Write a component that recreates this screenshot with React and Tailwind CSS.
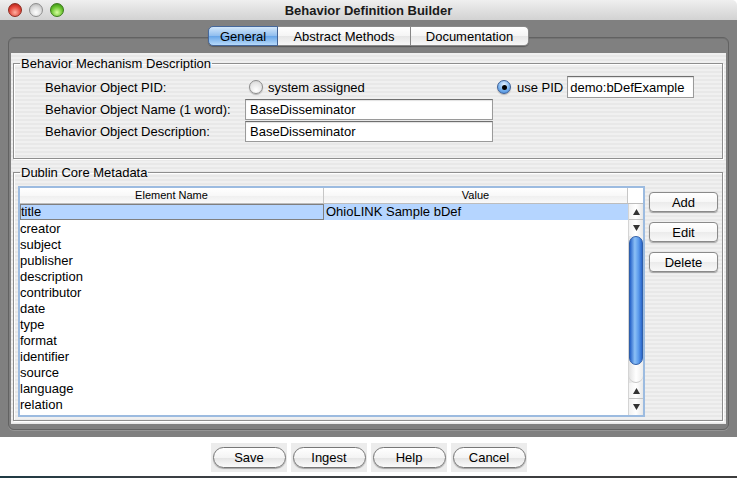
import React from "react";

const rows = [
  "title",
  "creator",
  "subject",
  "publisher",
  "description",
  "contributor",
  "date",
  "type",
  "format",
  "identifier",
  "source",
  "language",
  "relation",
];

const Radio = ({ checked }) => (
  <div
    className={`w-[14px] h-[14px] rounded-full border flex items-center justify-center shadow-[0_1px_1px_rgba(0,0,0,0.25)] ${
      checked
        ? "border-[#3d5f96] bg-[radial-gradient(circle_at_50%_30%,#e4f1ff,#79b2ee_55%,#3c7fd6)]"
        : "border-[#8c8c8c] bg-[radial-gradient(circle_at_50%_75%,#ffffff,#e6e6e6_60%,#cfcfcf)]"
    }`}
  >
    {checked && <div className="w-[5px] h-[5px] rounded-full bg-black"></div>}
  </div>
);

const TextBox = ({ value, className = "" }) => (
  <div
    className={`bg-white border border-[#9a9a9a] border-t-[#6f6f6f] shadow-[inset_0_1px_1px_rgba(0,0,0,0.12)] flex items-center overflow-hidden whitespace-nowrap ${className}`}
  >
    {value}
  </div>
);

const SideButton = ({ text }) => (
  <div className="w-[69px] h-[20px] rounded-[4px] border border-[#8a8a8a] bg-[linear-gradient(180deg,#ffffff,#f7f7f7_50%,#ebebeb_51%,#f8f8f8)] shadow-[0_1px_1px_rgba(0,0,0,0.3)] flex items-center justify-center">
    {text}
  </div>
);

const PillButton = ({ text }) => (
  <div className="w-[76px] h-[29px] bg-[#ececec] flex items-center justify-center">
    <div className="w-[73px] h-[21px] rounded-full border border-[#777] bg-[linear-gradient(180deg,#ffffff,#f4f4f4_50%,#e3e3e3_51%,#fbfbfb)] shadow-[0_1px_1px_rgba(0,0,0,0.3)] flex items-center justify-center">
      {text}
    </div>
  </div>
);

const Arrow = ({ up, border }) => (
  <div
    className={`h-[16px] flex items-center justify-center bg-[linear-gradient(90deg,#f2f2f2,#ffffff_50%,#e8e8e8)] ${
      border ? "border-b border-[#c4c4c4]" : ""
    }`}
  >
    <svg width="7" height="6" viewBox="0 0 7 6">
      {up ? <path d="M3.5 0 L7 6 L0 6 Z" fill="#333" /> : <path d="M0 0 L7 0 L3.5 6 Z" fill="#333" />}
    </svg>
  </div>
);

const TrafficLight = ({ className }) => (
  <div className={`w-[14px] h-[14px] rounded-full border ${className}`}></div>
);

export default function App() {
  return (
    <div className="w-[737px] h-[478px] bg-white overflow-hidden font-['Liberation_Sans',Arial,sans-serif] text-[13px] text-black leading-[15px]">
      {/* Title bar */}
      <div className="h-[20px] flex items-center bg-[linear-gradient(180deg,#efefef,#d2d2d2)] rounded-tr-[5px]">
        <div className="w-[64px] flex items-center gap-[7px] pl-[8px]">
          <TrafficLight className="border-[#8c2a1e] bg-[radial-gradient(circle_at_50%_70%,#ffb0a0,#e2463a_55%,#a3170d)]" />
          <TrafficLight className="border-[#8e8e8e] bg-[radial-gradient(circle_at_50%_70%,#ffffff,#dadada_55%,#a9a9a9)]" />
          <TrafficLight className="border-[#3b7a1b] bg-[radial-gradient(circle_at_50%_70%,#d8ffa0,#67c22c_55%,#2c7a0e)]" />
        </div>
        <div className="flex-1 text-center font-bold text-[#1a1a1a]">Behavior Definition Builder</div>
        <div className="w-[64px]"></div>
      </div>

      {/* Gray window body */}
      <div className="h-[417px] bg-[#808080] pt-[6px] px-[8px]">
        <div className="relative z-10 flex justify-center h-[20px]">
          <div className="w-[70px] rounded-l-[5px] border border-[#46689c] bg-[linear-gradient(180deg,#d3e7fb,#8fbdee_50%,#67a5e8_51%,#b7dafa)] flex items-center justify-center shadow-[0_1px_1px_rgba(0,0,0,0.3)]">
            General
          </div>
          <div className="w-[133px] border-y border-r border-[#8a8a8a] bg-[linear-gradient(180deg,#ffffff,#f5f5f5_50%,#e6e6e6_51%,#f7f7f7)] flex items-center justify-center shadow-[0_1px_1px_rgba(0,0,0,0.3)]">
            Abstract Methods
          </div>
          <div className="w-[118px] rounded-r-[5px] border-y border-r border-[#8a8a8a] bg-[linear-gradient(180deg,#ffffff,#f5f5f5_50%,#e6e6e6_51%,#f7f7f7)] flex items-center justify-center shadow-[0_1px_1px_rgba(0,0,0,0.3)]">
            Documentation
          </div>
        </div>

        {/* Tab panel */}
        <div className="-mt-[9px] rounded-[6px] border border-[#626262] shadow-[inset_0_1px_0_#737373,0_1px_0_#959595] pt-[15px] pb-[5px] px-[2px]">
          <div className="h-[371px] bg-[repeating-linear-gradient(180deg,#f0f0f0_0_2px,#e8e8e8_2px_4px)] pt-[3px] pl-[2px] pr-[3px]">
            {/* Behavior Mechanism Description */}
            <fieldset className="border border-[#8e8e8e] shadow-[inset_1px_1px_0_#fff,1px_1px_0_#fff]">
              <legend className="ml-[6px] px-[1px] leading-[15px]">Behavior Mechanism Description</legend>
              <div className="pt-[5px] pb-[16px] pl-[31px]">
                <div className="flex items-center h-[22px]">
                  <div className="w-[200px]">Behavior Object PID:</div>
                  <div className="w-[252px] flex items-center pl-[4px]">
                    <Radio />
                    <span className="ml-[5px]">system assigned</span>
                  </div>
                  <Radio checked />
                  <span className="ml-[6px]">use PID</span>
                  <TextBox value="demo:bDefExample" className="ml-[4px] w-[127px] h-[22px] pl-[2px]" />
                </div>
                <div className="flex items-center h-[21px] mt-[1px]">
                  <div className="w-[200px]">Behavior Object Name (1 word):</div>
                  <TextBox value="BaseDisseminator" className="w-[248px] h-[21px] px-[4px]" />
                </div>
                <div className="flex items-center h-[21px] mt-[1px]">
                  <div className="w-[200px]">Behavior Object Description:</div>
                  <TextBox value="BaseDisseminator" className="w-[248px] h-[21px] px-[4px]" />
                </div>
              </div>
            </fieldset>

            {/* Dublin Core Metadata */}
            <fieldset className="mt-[6px] border border-[#8e8e8e] shadow-[inset_1px_1px_0_#fff,1px_1px_0_#fff]">
              <legend className="ml-[6px] px-[1px] leading-[15px]">Dublin Core Metadata</legend>
              <div className="flex pt-[6px] pb-[3px] pl-[4px]">
                <div className="w-[627px] h-[231px] border-2 border-[#9cbbe0] bg-white flex flex-col">
                  {/* header */}
                  <div className="h-[16px] flex border-b border-[#bdbdbd] text-[11px] leading-[14px] bg-[linear-gradient(180deg,#ffffff,#f8f8f8_50%,#efefef_51%,#f9f9f9)]">
                    <div className="w-[304px] border-r border-[#c6c6c6] text-center">Element Name</div>
                    <div className="w-[304px] border-r border-[#c6c6c6] text-center">Value</div>
                    <div className="w-[15px] bg-white"></div>
                  </div>
                  {/* body */}
                  <div className="flex flex-1">
                    <div className="w-[608px]">
                      {rows.map((r, i) =>
                        i === 0 ? (
                          <div key={r} className="h-[16px] flex bg-[#b5d5ff]">
                            <div className="w-[304px] border border-[#7f7f7f] leading-[14px]">{r}</div>
                            <div className="w-[304px] pl-[2px] leading-[16px]">OhioLINK Sample bDef</div>
                          </div>
                        ) : (
                          <div key={r} className="h-[16px] flex items-center">
                            {r}
                          </div>
                        )
                      )}
                    </div>
                    <div className="w-[15px] flex flex-col border-l border-[#d4d4d4]">
                      <Arrow up border />
                      <Arrow />
                      <div className="flex-1 flex flex-col bg-[linear-gradient(90deg,#e2e2e2,#ffffff_50%,#ececec)]">
                        <div className="h-[129px] rounded-full border border-[#2f5ea8] bg-[linear-gradient(90deg,#2561c8,#8cc0f6_40%,#5d9cec_70%,#2a66cc)]"></div>
                        <div className="flex-1 rounded-b-full border-b border-[#c8c8c8]"></div>
                      </div>
                      <Arrow up border />
                      <Arrow />
                    </div>
                  </div>
                </div>
                <div className="ml-[4px] mt-[6px] flex flex-col gap-[10px]">
                  <SideButton text="Add" />
                  <SideButton text="Edit" />
                  <SideButton text="Delete" />
                </div>
              </div>
            </fieldset>
          </div>
        </div>
      </div>

      {/* Bottom button bar */}
      <div className="h-[39px] flex justify-center gap-[4px] pt-[6px] pl-[1px]">
        <PillButton text="Save" />
        <PillButton text="Ingest" />
        <PillButton text="Help" />
        <PillButton text="Cancel" />
      </div>
      <div className="h-[2px] bg-[linear-gradient(90deg,#1e3a44,#3a3f44_20%,#3d3d3d)]"></div>
    </div>
  );
}
